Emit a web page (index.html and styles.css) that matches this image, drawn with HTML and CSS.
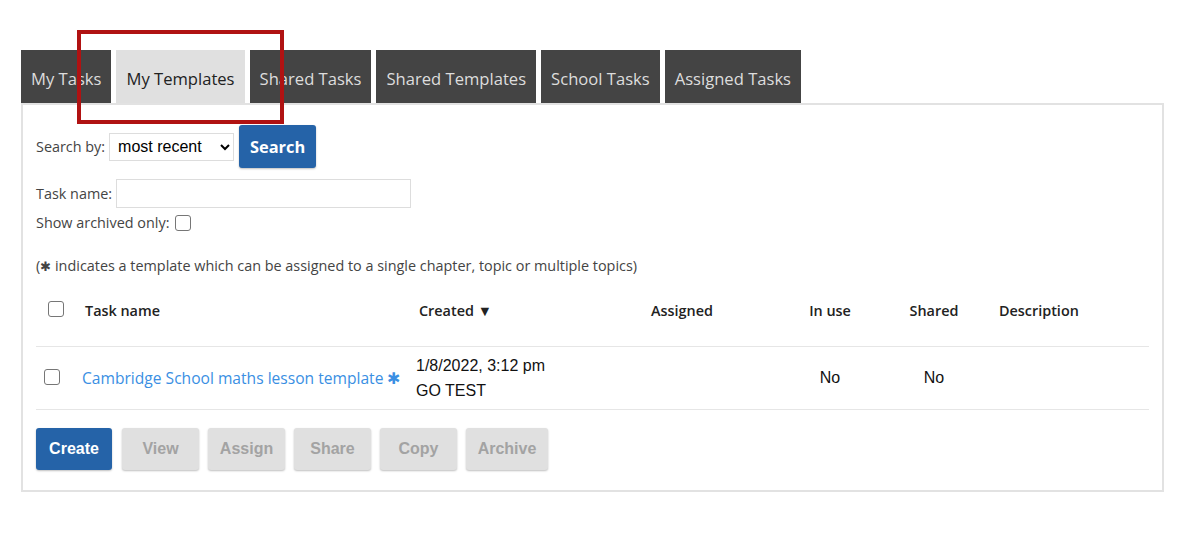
FILE: index.html
```html
<!DOCTYPE html>
<html lang="en">
<head>
  <meta charset="UTF-8" />
  <title>My Templates</title>
  <link rel="stylesheet" href="styles.css">
</head>
<body>
  <div class="page">
    <div class="tabs">
      <div class="tab">My Tasks</div>
      <div class="tab active">My Templates</div>
      <div class="tab">Shared Tasks</div>
      <div class="tab">Shared Templates</div>
      <div class="tab">School Tasks</div>
      <div class="tab">Assigned Tasks</div>
    </div>
    <div class="highlight"></div>

    <div class="panel">
      <div class="search-row">
        <label>Search by:</label>
        <select class="search-select">
          <option>most recent</option>
        </select>
        <button class="btn primary search-btn">Search</button>
      </div>

      <div class="field-row">
        <label>Task name:</label>
        <input type="text" class="task-input" />
      </div>

      <div class="field-row archived">
        <label>Show archived only:</label>
        <span class="check"></span>
      </div>

      <p class="note">(<span class="star">&#10033;</span> indicates a template which can be assigned to a single chapter, topic or multiple topics)</p>

      <table class="tasks">
        <colgroup>
          <col style="width:39px" />
          <col style="width:337px" />
          <col style="width:188px" />
          <col style="width:164px" />
          <col style="width:132px" />
          <col style="width:76px" />
          <col />
        </colgroup>
        <thead>
          <tr>
            <th class="cb-h"><span class="check"></span></th>
            <th class="name-h">Task name</th>
            <th>Created &#9660;</th>
            <th class="center">Assigned</th>
            <th class="center">In use</th>
            <th class="center">Shared</th>
            <th class="desc">Description</th>
          </tr>
        </thead>
        <tbody>
          <tr>
            <td class="cb-d"><span class="check"></span></td>
            <td><a class="task-link" href="#">Cambridge School maths lesson template <span class="star">&#10033;</span></a></td>
            <td class="created">
              <div>1/8/2022, 3:12 pm</div>
              <div>GO TEST</div>
            </td>
            <td></td>
            <td class="center plain">No</td>
            <td class="center plain">No</td>
            <td></td>
          </tr>
        </tbody>
      </table>

      <div class="actions">
        <button class="btn primary">Create</button>
        <button class="btn disabled">View</button>
        <button class="btn disabled">Assign</button>
        <button class="btn disabled">Share</button>
        <button class="btn disabled">Copy</button>
        <button class="btn disabled">Archive</button>
      </div>
    </div>
  </div>
</body>
</html>
```

FILE: styles.css
```css
* {
  box-sizing: border-box;
  margin: 0;
  padding: 0;
}

body {
  background-color: #fff;
  font-family: "Open Sans", sans-serif;
  color: #333;
}

.page {
  position: relative;
  padding: 50px 0 0 21px;
  width: 1164px;
}

.tabs {
  display: flex;
  gap: 5px;
}

.tab {
  height: 53px;
  padding: 4px 10px 0 10px;
  display: flex;
  align-items: center;
  background-color: #444;
  color: #ddd;
  font-size: 16.6px;
}

.tab.active {
  background-color: #e0e0e0;
  color: #222;
}

.highlight {
  position: absolute;
  left: 77px;
  top: 30px;
  width: 207px;
  height: 94px;
  border: 4px solid #b01212;
}

.panel {
  border: 2px solid #e2e2e2;
  padding: 20px 13px 20px 13px;
}

.search-row {
  display: flex;
  align-items: center;
  font-size: 14.4px;
  color: #444;
}

.search-row label {
  margin-right: 4px;
}

.search-select {
  width: 125px;
  height: 28px;
  font-family: "Liberation Sans", Arial, sans-serif;
  font-size: 16px;
  color: #000;
  border: 1px solid #ddd;
  background-color: #fff;
  padding: 0 4px;
  margin-right: 5px;
}

.btn {
  height: 42px;
  border: none;
  border-radius: 3px;
  font-family: "Liberation Sans", Arial, sans-serif;
  font-weight: bold;
  font-size: 16px;
  box-shadow: 0 1px 2px rgba(0, 0, 0, 0.25);
}

.btn.primary {
  background-color: #2563a8;
  color: #fff;
}

.search-btn {
  width: 77px;
  height: 43px;
  font-family: "Open Sans", sans-serif;
  font-size: 16.4px;
}

.field-row {
  display: flex;
  align-items: center;
  font-size: 14.4px;
  color: #444;
  margin-top: 11px;
}

.field-row label {
  margin-right: 4px;
}

.task-input {
  width: 295px;
  height: 29px;
  border: 1px solid #ddd;
}

.field-row.archived {
  margin-top: 5px;
}

.field-row.archived label {
  margin-right: 6px;
}

.check {
  display: inline-block;
  width: 16px;
  height: 16px;
  border: 1px solid #767676;
  border-radius: 3px;
  background-color: #fff;
}

.note {
  font-size: 14.4px;
  color: #444;
  margin-top: 24px;
}

.star {
  font-size: 13px;
}

.tasks {
  table-layout: fixed;
  width: 1113px;
  border-collapse: collapse;
  margin-top: 12px;
}

.tasks th {
  text-align: left;
  font-weight: 600;
  font-size: 14.4px;
  color: #222;
  height: 59px;
  padding: 0 0 11px 7px;
  vertical-align: middle;
  border-bottom: 1px solid #e6e6e6;
}

.tasks th.cb-h {
  padding-left: 12px;
}

.tasks th.name-h {
  padding-left: 10px;
}

.tasks th.center,
.tasks td.center {
  text-align: center;
  padding-left: 0;
}

.tasks th.desc {
  padding-left: 27px;
}

.tasks td {
  height: 63px;
  padding-left: 4px;
  vertical-align: middle;
  border-bottom: 1px solid #e6e6e6;
}

.tasks td.cb-d {
  padding-left: 8px;
  padding-top: 2px;
}

.task-link {
  color: #3a8fe3;
  text-decoration: none;
  font-size: 15.6px;
  padding-left: 3px;
}

.task-link .star {
  color: #3a8fe3;
  font-size: 16px;
}

.created {
  font-family: "Liberation Sans", Arial, sans-serif;
  font-size: 16px;
  color: #111;
  line-height: 25px;
}

.plain {
  font-family: "Liberation Sans", Arial, sans-serif;
  font-size: 16px;
  color: #111;
}

.actions {
  display: flex;
  margin-top: 18px;
  gap: 9px;
}

.actions .btn {
  width: 77px;
}

.actions .btn:first-child {
  width: 76px;
  margin-right: 1px;
}

.actions .btn:last-child {
  width: 82px;
}

.btn.disabled {
  background-color: #e0e0e0;
  color: #a3a3a3;
}
```
